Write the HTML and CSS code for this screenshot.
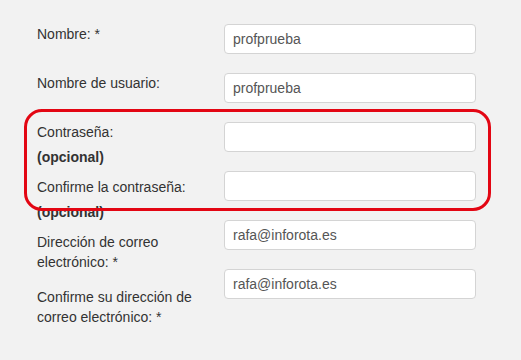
FILE: index.html
```html
<!DOCTYPE html>
<html lang="es">
<head>
<meta charset="utf-8">
<title>Perfil</title>
<link rel="stylesheet" href="styles.css">
</head>
<body>
<div class="form">
  <div class="labels">
    <div class="lrow">Nombre: *</div>
    <div class="lrow">Nombre de usuario:</div>
    <div class="lrow tall">Contraseña:<span class="opt">(opcional)</span></div>
    <div class="lrow tall">Confirme la contraseña:<span class="opt">(opcional)</span></div>
    <div class="lrow tall">Dirección de correo electrónico: *</div>
    <div class="lrow tall">Confirme su dirección de correo electrónico: *</div>
  </div>
  <div class="fields">
    <input class="field" type="text" value="profprueba">
    <input class="field" type="text" value="profprueba">
    <input class="field" type="password" value="">
    <input class="field" type="password" value="">
    <input class="field" type="text" value="rafa@inforota.es">
    <input class="field" type="text" value="rafa@inforota.es">
  </div>
  <div class="highlight"></div>
</div>
</body>
</html>
```
FILE: styles.css
```css
html, body {
  margin: 0;
  padding: 0;
  background: #f2f2f2;
}
body {
  font-family: "Liberation Sans", Arial, sans-serif;
  font-size: 14px;
  color: #333333;
  width: 521px;
  height: 360px;
  overflow: hidden;
}
.form {
  position: relative;
  display: grid;
  grid-template-columns: 187px 252px;
  padding: 24px 0 0 37px;
}
.labels {
  display: flex;
  flex-direction: column;
}
.lrow {
  height: 49px;
  line-height: 20px;
  width: 180px;
}
.lrow.tall {
  height: 55px;
}
.opt {
  display: block;
  margin-top: 5px;
  font-weight: bold;
}
.fields {
  display: flex;
  flex-direction: column;
  gap: 19px;
}
.field {
  box-sizing: border-box;
  width: 252px;
  height: 30px;
  margin: 0;
  padding: 0 8px;
  border: 1px solid #d4d4d4;
  border-radius: 4px;
  background: #ffffff;
  font-family: "Liberation Sans", Arial, sans-serif;
  font-size: 14px;
  color: #555555;
  outline: none;
}
.highlight {
  position: absolute;
  left: 24px;
  top: 109px;
  width: 467px;
  height: 102px;
  box-sizing: border-box;
  border: 3px solid #e30613;
  border-radius: 18px;
  pointer-events: none;
}
```
